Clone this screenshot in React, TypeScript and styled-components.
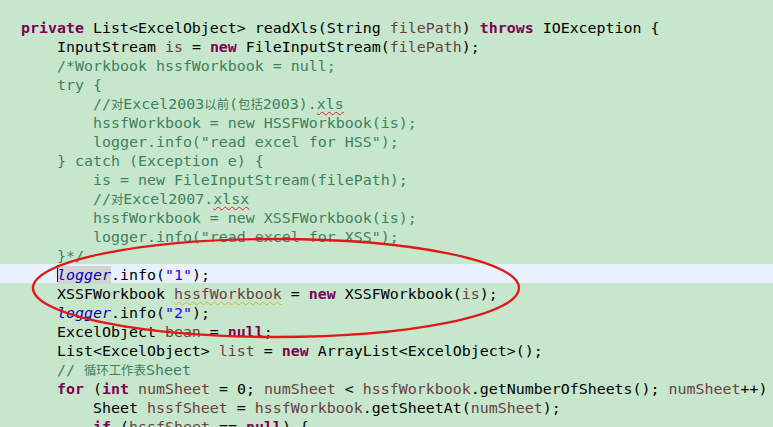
import React from "react"
import styled, { createGlobalStyle } from "styled-components"

const GlobalStyle = createGlobalStyle`
  html, body {
    margin: 0;
    padding: 0;
    background: #c7e7cd;
    overflow: hidden;
  }
`

type Kind = "plain" | "kw" | "cm" | "str" | "fld" | "loc" | "err" | "warn" | "cjk" | "fldi"

const colors: Record<string, string> = {
  plain: "#000000",
  kw: "#7f0055",
  cm: "#3f7f5f",
  str: "#2a00ff",
  fld: "#0000c0",
  loc: "#6a3e3e",
}

const Page = styled.div`
  position: relative;
  width: 773px;
  height: 427px;
  overflow: hidden;
  background: #c7e7cd;
`

const Editor = styled.div`
  display: flex;
  flex-direction: column;
  padding-top: 17px;
  font-family: "DejaVu Sans Mono", "Liberation Mono", "Noto Sans CJK SC", monospace;
  font-size: 14.95px;
`

const Line = styled.div<{ $current?: boolean }>`
  height: 16px;
  padding-top: 3px;
  line-height: 16px;
  white-space: pre;
  padding-left: 21px;
  background: ${p => (p.$current ? "#e8f2fe" : "transparent")};
`

const Tok = styled.span<{ $kind: string; $bold?: boolean; $italic?: boolean }>`
  color: ${p => colors[p.$kind] || "#000"};
  font-weight: ${p => (p.$bold ? 700 : 400)};
  font-style: ${p => (p.$italic ? "italic" : "normal")};
`

const Squiggle = styled.span<{ $color: string; $kind: string }>`
  color: ${p => colors[p.$kind]};
  text-decoration: underline wavy ${p => p.$color};
  text-decoration-thickness: 1px;
  text-underline-offset: 2px;
`

const Cjk = styled.span<{ $kind: string }>`
  color: ${p => colors[p.$kind]};
  font-family: "Noto Sans CJK SC", sans-serif;
  font-size: 12.4px;
`

const Mark = styled.span`
  background: #d4d4d4;
  position: relative;
`

const Caret = styled.span`
  position: absolute;
  left: 0;
  top: -1px;
  width: 1px;
  height: 17px;
  background: #000;
`

const Circle = styled.svg`
  position: absolute;
  left: 0;
  top: 0;
  pointer-events: none;
`

type T = [Kind, string, string?]

const I = "    "

const lines: { t: T[]; current?: boolean }[] = [
  { t: [["kw", "private"], ["plain", " List<ExcelObject> readXls(String "], ["loc", "filePath"], ["plain", ") "], ["kw", "throws"], ["plain", " IOException {"]] },
  { t: [["plain", I + "InputStream "], ["loc", "is"], ["plain", " = "], ["kw", "new"], ["plain", " FileInputStream("], ["loc", "filePath"], ["plain", ");"]] },
  { t: [["cm", I + "/*Workbook hssfWorkbook = null;"]] },
  { t: [["cm", I + "try {"]] },
  { t: [["cm", I + I + "//"], ["cjk", "对", "cm"], ["cm", "Excel2003"], ["cjk", "以前", "cm"], ["cm", "("], ["cjk", "包括", "cm"], ["cm", "2003)."], ["err", "xls", "cm"]] },
  { t: [["cm", I + I + "hssfWorkbook = new HSSFWorkbook(is);"]] },
  { t: [["cm", I + I + "logger.info(\"read excel for HSS\");"]] },
  { t: [["cm", I + "} catch (Exception e) {"]] },
  { t: [["cm", I + I + "is = new FileInputStream(filePath);"]] },
  { t: [["cm", I + I + "//"], ["cjk", "对", "cm"], ["cm", "Excel2007."], ["err", "xlsx", "cm"]] },
  { t: [["cm", I + I + "hssfWorkbook = new XSSFWorkbook(is);"]] },
  { t: [["cm", I + I + "logger.info(\"read excel for XSS\");"]] },
  { t: [["cm", I + "}*/"]] },
  { current: true, t: [["plain", I], ["fldi", "logger", "mark"], ["plain", ".info("], ["str", "\"1\""], ["plain", ");"]] },
  { t: [["plain", I + "XSSFWorkbook "], ["warn", "hssfWorkbook", "loc"], ["plain", " = "], ["kw", "new"], ["plain", " XSSFWorkbook("], ["loc", "is"], ["plain", ");"]] },
  { t: [["plain", I], ["fldi", "logger"], ["plain", ".info("], ["str", "\"2\""], ["plain", ");"]] },
  { t: [["plain", I + "ExcelObject "], ["loc", "bean"], ["plain", " = "], ["kw", "null"], ["plain", ";"]] },
  { t: [["plain", I + "List<ExcelObject> "], ["loc", "list"], ["plain", " = "], ["kw", "new"], ["plain", " ArrayList<ExcelObject>();"]] },
  { t: [["cm", I + "// "], ["cjk", "循环工作表", "cm"], ["cm", "Sheet"]] },
  { t: [["plain", I], ["kw", "for"], ["plain", " ("], ["kw", "int"], ["plain", " "], ["loc", "numSheet"], ["plain", " = 0; "], ["loc", "numSheet"], ["plain", " < "], ["loc", "hssfWorkbook"], ["plain", ".getNumberOfSheets(); "], ["loc", "numSheet"], ["plain", "++)"]] },
  { t: [["plain", I + I + "Sheet "], ["loc", "hssfSheet"], ["plain", " = "], ["loc", "hssfWorkbook"], ["plain", ".getSheetAt("], ["loc", "numSheet"], ["plain", ");"]] },
  { t: [["plain", I + I], ["kw", "if"], ["plain", " ("], ["loc", "hssfSheet"], ["plain", " == "], ["kw", "null"], ["plain", ") {"]] },
]

const renderToken = ([kind, text, extra]: T, i: number) => {
  if (kind === "cjk") return <Cjk key={i} $kind={extra || "plain"}>{text}</Cjk>
  if (kind === "err") return <Squiggle key={i} $kind={extra || "plain"} $color="#e02020">{text}</Squiggle>
  if (kind === "warn") return <Squiggle key={i} $kind={extra || "plain"} $color="#e0b020">{text}</Squiggle>
  if (kind === "fldi") {
    const tok = <Tok $kind="fld" $italic>{text}</Tok>
    return extra === "mark" ? (
      <Mark key={i}>
        <Caret />
        {tok}
      </Mark>
    ) : (
      <React.Fragment key={i}>{tok}</React.Fragment>
    )
  }
  return <Tok key={i} $kind={kind} $bold={kind === "kw"}>{text}</Tok>
}

export default function App() {
  return (
    <Page>
      <GlobalStyle />
      <Editor>
        {lines.map((l, i) => (
          <Line key={i} $current={l.current}>
            {l.t.map(renderToken)}
          </Line>
        ))}
      </Editor>
      <Circle width="773" height="427" viewBox="0 0 773 427">
        <ellipse cx="276" cy="288" rx="243" ry="49" fill="none" stroke="#e01818" strokeWidth="2.4" />
      </Circle>
    </Page>
  )
}
